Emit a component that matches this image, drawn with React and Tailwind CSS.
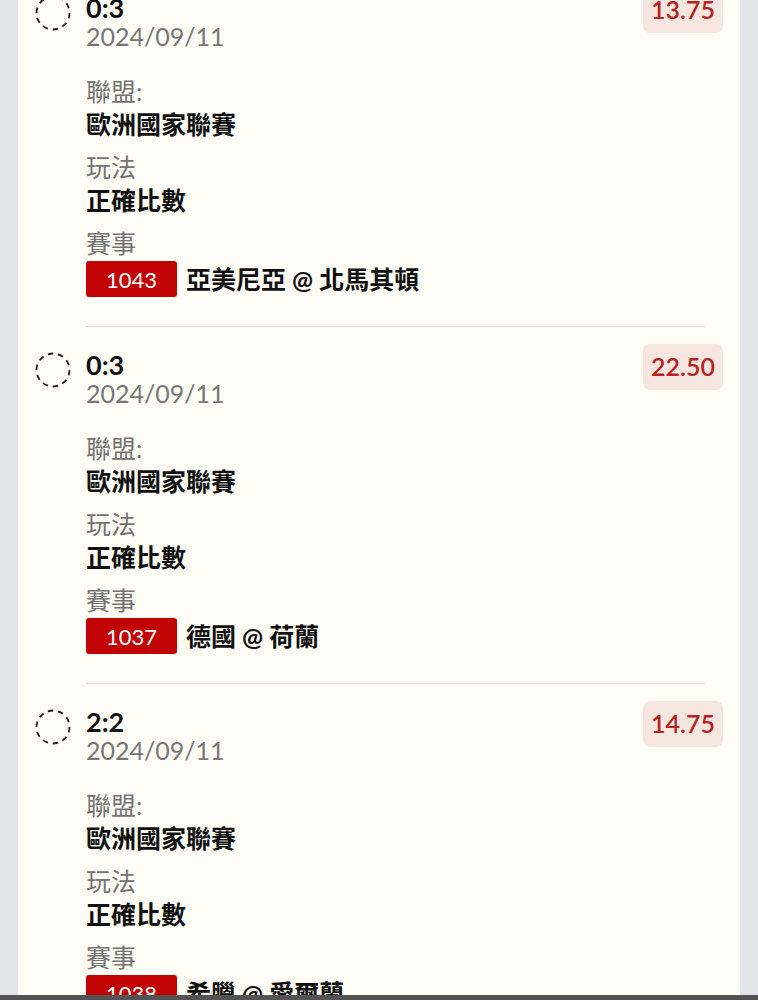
import React from "react";

const items = [
  { score: "0:3", price: "13.75", code: "1043", match: "亞美尼亞 @ 北馬其頓" },
  { score: "0:3", price: "22.50", code: "1037", match: "德國 @ 荷蘭" },
  { score: "2:2", price: "14.75", code: "1038", match: "希臘 @ 愛爾蘭" },
];

function DashedCircle() {
  return (
    <svg width="36" height="36" viewBox="0 0 36 36" className="shrink-0 mt-[8px]">
      <circle
        cx="18"
        cy="18"
        r="16.5"
        fill="none"
        stroke="#1a1a1a"
        strokeWidth="1.8"
        strokeDasharray="5.5 4.8"
      />
    </svg>
  );
}

function Field({ label, children, first }) {
  return (
    <div className={first ? "" : "mt-[10px]"}>
      <div className="text-[25px] leading-[33px] text-[#737373]">{label}</div>
      {children}
    </div>
  );
}

function Item({ it }) {
  return (
    <div className="flex pl-[17px] pr-[17px] pt-[17px] pb-[29px]">
      <DashedCircle />
      <div className="ml-[15px] flex-1 pt-[7px]">
        <div className="text-[27px] leading-[28px] font-bold text-[#111]">{it.score}</div>
        <div className="text-[25px] leading-[28px] text-[#777]">2024/09/11</div>
        <div className="mt-[25px]">
          <Field label="聯盟:" first>
            <div className="text-[25px] leading-[33px] font-bold text-[#111]">歐洲國家聯賽</div>
          </Field>
          <Field label="玩法">
            <div className="text-[25px] leading-[33px] font-bold text-[#111]">正確比數</div>
          </Field>
          <Field label="賽事">
            <div className="flex items-center mt-[1px]">
              <div className="h-[36px] w-[91px] rounded-[3px] bg-[#c10303] flex items-center justify-center text-white text-[22px]">
                {it.code}
              </div>
              <div className="ml-[9px] text-[25px] leading-[33px] font-bold text-[#111]">{it.match}</div>
            </div>
          </Field>
        </div>
      </div>
      <div className="h-[46px] w-[80px] rounded-[7px] bg-[#f7e5df] flex items-center justify-center text-[25px] font-semibold text-[#b42323] shrink-0">
        {it.price}
      </div>
    </div>
  );
}

export default function App() {
  return (
    <div
      className="min-h-[1000px] bg-[#e4e5ea] overflow-hidden"
      style={{ fontFamily: "Lato, 'Noto Sans CJK TC', sans-serif" }}
    >
      <div className="mx-[18px] bg-[#fdfdf5] min-h-[1000px]">
        <div className="mt-[-30px]">
          {items.map((it, i) => (
            <div key={i}>
              {i > 0 && (
                <div className="ml-[68px] mr-[35px] h-px bg-[#dedcd6]" />
              )}
              <Item it={it} />
            </div>
          ))}
        </div>
      </div>
      <div className="fixed left-0 right-0 bottom-0 h-[5px] bg-[#535353]" />
    </div>
  );
}
